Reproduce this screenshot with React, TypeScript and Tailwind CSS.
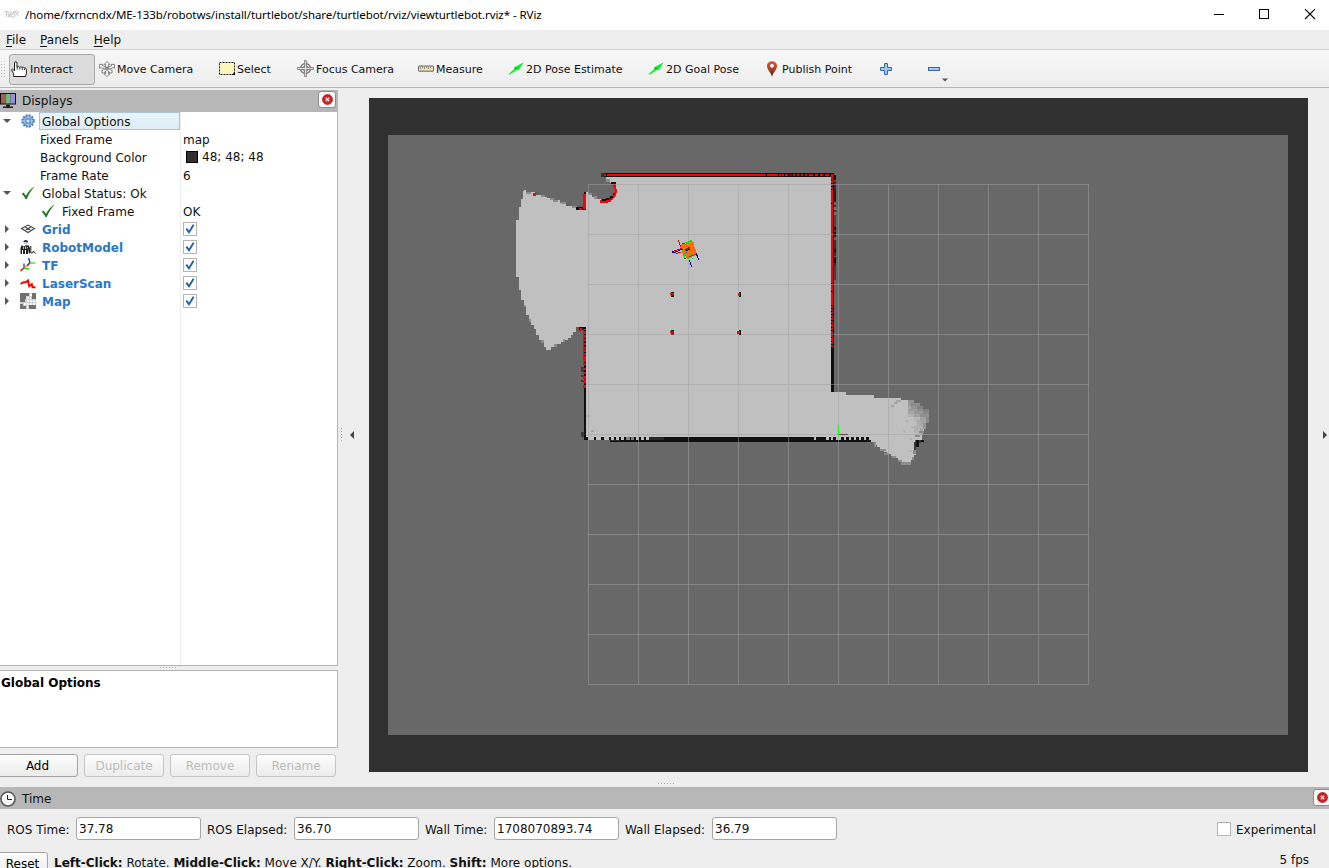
import React from "react";

const Z = "scale(0.333333)";

const wingCells = (() => {
  const out: { x: number; y: number; c: string }[] = [];
  for (let r = 0; r < 12; r++) {
    for (let k = 0; k < 8; k++) {
      const x = 1005 + k * 9;
      const y = 210 + r * 8.6;
      const right = r < 1 ? 1033 : r < 2 ? 1052 : r < 3 ? 1062 : r < 8 ? 1077 : r < 10 ? 1069 : 1064;
      if (x + 6 > right) continue;
      const dx = (x - 1005) / 63;
      const dy = Math.max(0, (258 - y) / 48);
      const t = dx <= 0.1 ? 0 : dy > 0 ? 0.1 + dx * 0.5 + dy * 0.4 : dx * dx * 0.6;
      const jitter = ((k * 7 + r * 11) % 5) * 4 - 8;
      if (t < 0.08) continue;
      const v = Math.round(Math.max(108, Math.min(190, 192 - t * 82 + jitter)));
      out.push({ x, y, c: `rgb(${v},${v},${v})` });
    }
  }
  return out;
})();

const lines = Array.from({ length: 11 }, (_, i) => i * 50);

const topDashes = [318, 354, 363, 373, 384, 394, 405, 417, 429, 442, 459, 473, 489, 507];
const rightDashes = [58, 69, 78, 87, 129, 369, 393, 434, 443, 452, 461, 470, 479, 488, 500, 511, 521, 532, 542, 552];
const leftDashes = [524, 532, 541, 550, 559, 568, 577, 586, 595];
const leftLow = [8, 19, 30, 42, 54, 63, 72, 82, 92, 102, 117, 129, 142, 155, 169];
const bottomLight = [
  [54, 18], [78, 15], [102, 15], [123, 9], [138, 9], [153, 9], [168, 12], [183, 9], [198, 9], [213, 9], [228, 9],
  [732, 6], [768, 9], [783, 6], [798, 9], [807, 6], [822, 6], [837, 6], [852, 6], [867, 6], [882, 6], [897, 6],
];
const shades = [
  [45, 16, "#0f0f0f"], [62, 28, "#303030"], [90, 36, "#202020"], [126, 9, "#686868"], [135, 6, "#303030"],
  [141, 9, "#787878"], [150, 6, "#303030"], [157, 9, "#707070"], [166, 35, "#454545"], [201, 9, "#181818"],
  [210, 6, "#383838"], [216, 16, "#181818"], [240, 26, "#303030"], [266, 10, "#111"], [276, 12, "#303030"],
  [290, 18, "#111"], [308, 10, "#303030"], [318, 42, "#424242"],
] as [number, number, string][];

function MapView() {
  return (
    <svg className="block h-[674px] w-[939px]" viewBox="369 98 939 674" shapeRendering="crispEdges">
      <rect x="369" y="98" width="939" height="674" fill="#303030" />
      <rect x="388" y="135" width="900" height="600" fill="#686868" />
      <g transform={`translate(500 160) ${Z}`}>
        <path fill="#c0c0c0" d="M72 93V90H78V97H105V105H123V111H140V115H160V120H180V129H204V138H225V144H249V103H258V97H265V105H275V110H290V118H303V126H330V115H345V75H335V68H330V60H318V51H997V840H257V510H228V517H220V525H212V533H205V540H196V545H182V553H162V562H152V570H138V560H132V548H123V540H117V525H108V508H103V495H93V480H87V465H78V440H72V420H63V390H57V350H48V180H57V141H63V117H69V93Z" />
        <path fill="#686868" d="M267 75H334V72H342V98H339V108H330V114H318V120H303V118H291V110H276V105H267Z" />
        <path fill="#8d8d8d" d="M78 97H92V103H78ZM123 106H135V111H123ZM150 115H162V120H150ZM160 120H175V125H160ZM182 125H197V131H182ZM216 139H231V145H216ZM265 100H275V105H265ZM282 108H291V117H282ZM318 57H330V66H318ZM189 538H196V546H189ZM162 553H170V560H162ZM72 435H78V441H72ZM87 477H93V486H87ZM123 540H132V548H123ZM360 49H385V52H360Z" />
        <path fill="#5f5f5f" d="M105 97H118V105H105ZM198 129H207V137H198ZM231 136H249V141H231ZM228 502H240V516H228Z" />
        <path fill="#101010" d="M303 39H600V51H303ZM333 66H348V73H333ZM228 141H258V150H228ZM237 502H258V600H237V515H249V510H237ZM252 97H258V103H252ZM306 117H324V123H306ZM318 114H333V120H318ZM330 108H339V114H330ZM338 98H345V108H338Z" />
        <path fill="#686868" d="M237 515H248V600H237Z" />
        <path fill="#303030" d="M303 39H312V51H303Z" />
        <path fill="red" d="M312 42H318V48H312ZM321 42H600V48H321ZM99 99H108V108H99ZM249 102H258V147H249ZM237 144H246V150H237ZM340 72H348V87H351V98H348V108H345V115H340V121H334V127H325V129H306V130H300V120H306V123H318V120H327V117H333V113H339V105H342V96H345V87H342V81H340ZM240 504H246V514H240ZM249 507H258V600H249Z" />
        <g fill="#101010">
          {leftDashes.map((y) => <rect key={y} x="252" y={y} width="6" height="4" />)}
          <path d="M513 396H522V411H513ZM513 510H522V525H513Z" />
        </g>
        <path fill="red" d="M510 399H522V405H510ZM510 513H522V519H510Z" />
      </g>
      <g transform={`translate(570 330) ${Z}`}>
        <path fill="#c0c0c0" d="M783 186H828V195H912V204H993V210H1018V219H1042V258H1068V285H1062V310H1055V330H1035V361H1038V375H1032V390H1023V398H996V391H984V385H972V379H963V373H951V367H942V360H930V352H921V345H912V335H903V327H783Z" />
        {wingCells.map((c, i) => <rect key={i} x={c.x} y={c.y} width="9.2" height="9" fill={c.c} />)}
        <path fill="#a4a4a4" d="M978 210H993V216H978ZM972 216H984V222H972ZM963 225H971V231H963Z" />
        <path fill="#8d8d8d" d="M912 337H918V351H912ZM930 358H948V364H930ZM942 369H957V376H942ZM966 379H978V385H966ZM984 391H996V397H984ZM993 397H1023V404H993ZM1030 361H1038V373H1030ZM1026 382H1032V391H1026ZM1047 303H1062V309H1047ZM1035 315H1050V321H1035Z" />
        <path fill="#b4b4b4" d="M1014 255H1024V261H1014ZM1005 270H1018V276H1005ZM1023 288H1032V296H1023ZM999 300H1009V306H999ZM1017 324H1026V330H1017ZM1018 360H1026V367H1018ZM48 255H57V261H48Z" />
        <path fill="#a8a8a8" d="M63 300H72V306H63Z" />
        <path fill="#111111" d="M1038 330H1047V351H1038ZM1053 330H1062V335H1053Z" />
        <path fill="#3b3b3b" d="M1032 336H1038V360H1032ZM1047 330H1053V340H1047ZM33 111H42V125H33ZM33 135H42V141H33ZM33 150H40V156H33ZM33 306H42V321H33Z" />
        <path fill="#101010" d="M42 0H48V321H903V335H105V330H42ZM783 0H792V186H783Z" />
        <path fill="#686868" d="M102 330H120V336H102Z" />
        <path fill="#292929" d="M237 321H282V330H237ZM120 330H150V333H120Z" />
        {bottomLight.map(([x, w]) => <rect key={x} x={x} y="321" width={w} height="9" fill={x === 168 || x === 183 ? "#858585" : "#c0c0c0"} />)}
        <g fill="red">
          {leftLow.map((y) => <rect key={y} x="39" y={y - 4} width="8" height="8" />)}
          <path d="M783 0H789V50H783Z" />
        </g>
        <path fill="#101010" d="M783 9H792V12H783ZM783 20H792V23H783ZM783 30H792V33H783ZM783 42H792V45H783Z" />
      </g>
      <g transform={`translate(660 160) ${Z}`}>
        <path fill="#101010" d="M0 39H522V520H513V51H0Z" />
        {shades.map(([y, h, c]) => <rect key={y} x="522" y={y} width="6" height={h} fill={c} />)}
        <path fill="red" d="M0 42H519V560H513V48H0Z" />
        <g fill="#101010">
          {topDashes.map((x, i) => <rect key={x} x={x} y="42" width={i < 4 ? 3 : 6} height="6" />)}
          {rightDashes.map((y) => <rect key={y} x="513" y={y} width="6" height="3" />)}
          <path d="M519 51H522V570H519Z" />
        </g>
      </g>
      <g fill="none" stroke="#a0a0a4" strokeOpacity="0.5" strokeWidth="1">
        {lines.map((v) => (
          <path key={v} d={`M${588.5 + v} 184V685M588 ${184.5 + v}H1089`} />
        ))}
      </g>
      <path fill="#101010" d="M739 292H741V297H739ZM739 330H741V335H739Z" />
      <path fill="red" d="M738 293H740V296H738ZM737 331H740V334H737Z" />
      <g transform={`translate(660 160) ${Z}`}>
        <path fill="#ff6c0a" d="M63 252H78V249H90V246H102V261H105V267H108V282H102V285H93V291H78V288H72V279H66V267H63Z" />
        <path fill="#00e000" d="M75 246H87V249H75ZM84 243H93V246H84ZM90 240H96V246H90ZM66 270H69V276H66ZM69 279H75V294H72V288H69ZM78 291H90V294H78ZM81 294H87V297H81ZM90 279H93V285H90ZM93 288H96V294H93ZM96 294H99V297H96Z" />
        <path fill="#5f4a20" d="M66 249H75V252H66ZM84 262H90V270H84ZM78 264H84V270H78ZM72 294H78V297H72ZM87 288H93V291H87ZM78 276H81V279H78Z" />
        <path fill="#e00000" d="M54 240H57V246H54ZM57 246H60V255H57ZM60 255H63V261H60ZM42 270H51V273H42ZM51 267H60V270H51ZM48 279H54V282H48ZM54 276H63V279H54ZM60 264H66V267H60ZM93 285H102V288H93ZM102 282H108V285H102ZM75 267H81V270H75Z" />
        <path fill="#0000cc" d="M36 273H42V279H36ZM42 276H48V279H42ZM45 273H54V276H45ZM54 270H60V273H54ZM60 267H69V270H60ZM75 270H84V273H75ZM84 267H90V270H84ZM108 279H111V287H108ZM111 285H114V294H111ZM114 294H117V300H114ZM87 300H90V306H87ZM90 306H93V315H90ZM93 315H96V321H93Z" />
      </g>
      <path fill="#00ff00" d="M838 425H839V435H838Z" />
      <path fill="#6b4848" d="M839 434H848V435H839Z" />
    </svg>
  );
}

function Hand() {
  return (
    <svg className="-ml-px h-4 w-4" viewBox="0 0 16 16">
      <path d="M2.7 15.5V12.8L.8 9.5C.3 8 1.6 7.5 2.5 8.7L3.5 10V2C3.5.2 6 .2 6 2V6.2C7 5.2 8.3 5.5 8.6 6.4C9.6 5.4 11 5.8 11.2 6.8C12.2 5.9 13.5 6.3 13.7 7.2C14.8 6.8 15.4 7.6 15.4 8.7V12.5L14.5 15.5Z" fill="#fff" stroke="#1c1c1c" strokeWidth="1" />
      <path d="M6.2 6V8.5M8.8 6.5V8.7M11.3 7V9M13.6 7.3V9" stroke="#222" strokeWidth=".9" />
    </svg>
  );
}

function MoveIcon() {
  return (
    <svg className="h-4 w-4" viewBox="0 0 16 16" fill="#fff" stroke="#666" strokeWidth=".8">
      <path d="M8 .5L10.8 3.4H9.3V5.7L12.7 4.8L12.2 3.4L15.6 3.4V7.3L14.2 6.6L10.5 8L12 9.5L13 9V12H9.8L10.6 11L9.3 10V13H10.8L8 15.6L5.2 13H6.7V10L5.4 11L6.2 12H3V9L4 9.5L5.5 8L1.8 6.6L.4 7.3V3.4H3.8L3.3 4.8L6.7 5.7V3.4H5.2Z" />
      <path d="M5.5 7.2L8 6L10.5 7.2L8 9.5Z" fill="#999" />
    </svg>
  );
}

function SelectIcon() {
  return (
    <svg className="h-4 w-4" viewBox="0 0 16 16">
      <rect x=".5" y="1.5" width="15" height="12" fill="#fbf6b9" stroke="#222" strokeDasharray="2 1" />
      <path d="M16 11V14H12.5Z" fill="#000" />
    </svg>
  );
}

function FocusIcon() {
  return (
    <svg className="h-[17px] w-[17px]" viewBox="0 0 17 17" fill="none" stroke="#777">
      <circle cx="8.5" cy="8.5" r="5" strokeWidth="1.3" />
      <circle cx="8.5" cy="8.5" r="2.6" />
      <path d="M7.5 .5H9.5V7.5H16.5V9.5H9.5V16.5H7.5V9.5H.5V7.5H7.5Z" strokeWidth=".8" fill="#ddd" />
    </svg>
  );
}

function MeasureIcon() {
  return (
    <svg className="h-4 w-4" viewBox="0 0 16 16">
      <rect x=".5" y="5" width="15" height="5.2" rx=".5" fill="#ece0b4" stroke="#666" />
      <path d="M2.5 5.5V8M4.5 5.5V7M6.5 5.5V8M8.5 5.5V7M10.5 5.5V8M12.5 5.5V7" stroke="#777" strokeWidth=".8" />
    </svg>
  );
}

function ArrowIcon() {
  return (
    <svg className="h-4 w-4" viewBox="0 0 16 16">
      <path d="M.6 13.2L6.5 7.8L5.5 6.8L15.6 1.2L10.8 9.5L9.5 8.5L1.7 13.8Z" fill="#0cf02a" />
      <path d="M6.5 7.8L8 6.2L9.5 8.5Z" fill="#0aa31c" />
    </svg>
  );
}

function Pin() {
  return (
    <svg className="h-4 w-3" viewBox="0 0 12 16">
      <defs>
        <linearGradient id="pin" x1="0" y1="0" x2="0" y2="1">
          <stop offset="0" stopColor="#e3583a" />
          <stop offset=".55" stopColor="#a63c22" />
          <stop offset="1" stopColor="#3d1c10" />
        </linearGradient>
      </defs>
      <path d="M6 16C5.5 12 1 9 1 5C1 2 3.2.2 6 .2S11 2 11 5C11 9 6.5 12 6 16Z" fill="url(#pin)" />
      <circle cx="6" cy="4.8" r="1.9" fill="#fff" />
    </svg>
  );
}

function CloseBadge() {
  return (
    <span className="mb-[3px] flex h-[17px] w-[18px] shrink-0 items-center justify-center rounded-[3px] border border-[#8d8d8d] bg-[#f8f8f8]">
      <svg className="h-[11px] w-[11px]" viewBox="0 0 11 11">
        <circle cx="5.5" cy="5.5" r="5" fill="#d02224" stroke="#a81518" strokeWidth=".7" />
        <path d="M3.8 3.8L7.2 7.2M7.2 3.8L3.8 7.2" stroke="#f6dcdc" strokeWidth="1.4" />
      </svg>
    </span>
  );
}

function Tri({ open }: { open?: boolean }) {
  return (
    <span className="flex w-[14px] shrink-0 items-center justify-center">
      <svg className="h-2 w-2" viewBox="0 0 8 8">
        <path d={open ? "M0 2H8L4 6Z" : "M2 0V8L6 4Z"} fill="#555" />
      </svg>
    </span>
  );
}

const Gear = () => (
  <svg className="h-[14px] w-[14px]" viewBox="0 0 14 14">
    <circle cx="7" cy="7" r="5.8" fill="none" stroke="#3f74b8" strokeWidth="1.9" strokeDasharray="1.8 1.24" />
    <circle cx="7" cy="7" r="5" fill="#8db5e2" stroke="#3f74b8" strokeWidth=".8" />
    <circle cx="7" cy="7" r="2.6" fill="none" stroke="#4a7dbf" strokeWidth=".9" />
    <circle cx="7" cy="7" r="1" fill="#fff" />
    <path d="M7 2V4.4M7 9.6V12M2 7H4.4M9.6 7H12" stroke="#dbe8f6" strokeWidth=".8" />
  </svg>
);
const Check = () => (
  <svg className="-ml-px h-[14px] w-[14px]" viewBox="0 0 14 14">
    <path d="M.8 8L2.5 6.6L5 9.8C7 6 9.8 2.5 13.7 .5C10.4 4.2 7.8 8.3 5.7 13H4.4C3.6 11 2.3 9 .8 8Z" fill="#1d7a1d" />
  </svg>
);
const GridIcon = () => (
  <svg className="h-4 w-4" viewBox="0 0 16 16" fill="none" stroke="#444" strokeWidth="1.1">
    <path d="M1.5 7.5L8 4L14.5 7.5L8 11.5ZM4.8 5.8L11.2 9.6M11.2 5.8L4.8 9.6" />
  </svg>
);
const RobotIcon = () => (
  <svg className="h-4 w-4" viewBox="0 0 16 16">
    <path d="M3.5 2Q5.8 -.2 8 2V3.2H3.5Z" fill="#232b55" />
    <path d="M4 3.2H7.2V5H4Z" fill="#ccc" />
    <path d="M1.5 6.2L4 7.5L5.5 6.2L9 6.5V10L8 15H6V11H5V15H3V11H2V15H.5V9Z" fill="#222" />
    <path d="M3.5 8V10M5.5 7.5V10M7.3 8V9.5" stroke="#ddd" strokeWidth=".9" />
    <path d="M9.5 14.5V8.5L10.8 7V14H12.5L13.5 12L15.5 14.5" fill="none" stroke="#222" strokeWidth="1" />
  </svg>
);
const TfIcon = () => (
  <svg className="h-4 w-4" viewBox="0 0 16 16" fill="none" strokeWidth="1.2">
    <path d="M4 11L10 6" stroke="#f5ad24" />
    <path d="M4.5 10.5L.5 14M9.5 6L7 9" stroke="#f00" strokeWidth="1.5" />
    <path d="M4 10V6.5M10 6L8.7 1" stroke="#1616d8" />
    <path d="M4 11L9.5 12.2M10 6H15.5" stroke="#0c0" />
  </svg>
);
const LaserIcon = () => (
  <svg className="h-4 w-4" viewBox="0 0 16 16">
    <path d="M.5 9L3 7.5L6 7L8 5.5L9.3 11.3L11.8 9.3L12.5 12.3H15.5" fill="none" stroke="#f00" strokeWidth="2" />
  </svg>
);
const MapIcon = () => (
  <svg className="h-4 w-4" viewBox="0 0 16 16" shapeRendering="crispEdges">
    <path fill="#cfcfcf" d="M0 0H16V16H0Z" />
    <path fill="#fff" d="M10 1H12V3H10ZM7 4H9V6H7ZM10 4H11V6H10ZM7 7H9V9H7ZM10 7H12V9H10ZM13 7H15V9H13ZM7 10H9V12H7ZM10 10H12V12H10ZM4 10H6V12H4ZM13 10H15V12H13ZM7 13H8V15H7Z" />
    <path fill="#707070" d="M0 0H9V3H6V6H5V9H0ZM12 0H16V6H12ZM0 11H3V13H6V16H0ZM9 12H16V16H9Z" />
  </svg>
);

function Box({ checked }: { checked?: boolean }) {
  return (
    <span className="flex h-[14px] w-[14px] shrink-0 items-center justify-center border border-[#b5b5b5] bg-white">
      {checked && (
        <svg className="h-[10px] w-[10px]" viewBox="0 0 10 10">
          <path d="M1.3 4.6L4 8.3L8.6 .8" fill="none" stroke="#1f63a8" strokeWidth="1.9" />
        </svg>
      )}
    </span>
  );
}

function Row({ tri, icon, label, value, bold, depth = 0 }: {
  tri?: "open" | "closed"; icon?: React.ReactNode; label: string; value?: React.ReactNode; bold?: boolean; depth?: number;
}) {
  return (
    <div className="flex h-[18px] items-center">
      <div className="flex h-full w-[181px] shrink-0 items-center">
        {tri ? <Tri open={tri === "open"} /> : <span className="w-[14px]" />}
        {depth === 1 && <span className="w-5" />}
        {icon && <span className="ml-[6px] mr-[6px] flex w-4 justify-center">{icon}</span>}
        {!icon && <span className="w-[26px]" />}
        <span className={bold ? "pt-[2px] font-bold text-[#2878c8]" : "pt-[2px]"}>{label}</span>
      </div>
      <div className="flex items-center pl-[2px]">{typeof value === "string" ? <span className="pt-[2px]">{value}</span> : value}</div>
    </div>
  );
}

function Button({ label, disabled, cls }: { label: string; disabled?: boolean; cls: string }) {
  return (
    <div className={`flex h-[23px] shrink-0 items-center justify-center rounded-[3px] border bg-linear-to-b from-[#fdfdfd] to-[#ececec] ${disabled ? "border-[#c6c6c6] text-[#bdbdbd]" : "border-[#a4a4a4] text-black"} ${cls}`}>
      {label}
    </div>
  );
}

function Field({ label, value, cls }: { label: string; value: string; cls: string }) {
  return (
    <div className="flex items-center">
      <span className={`shrink-0 pt-[2px] ${cls}`}>{label}</span>
      <span className="flex h-[23px] w-[125px] items-center rounded-[3px] border border-[#a5a5a5] bg-white pl-[2px] pt-px">{value}</span>
    </div>
  );
}

function Tool({ icon, label, cls }: { icon: React.ReactNode; label: string; cls: string }) {
  return (
    <div className={`flex shrink-0 items-center ${cls}`}>
      {icon}
      <span className="ml-[2px] pt-[3px] text-[11px]">{label}</span>
    </div>
  );
}

export default function App() {
  return (
    <div className="flex h-[868px] w-[1329px] flex-col overflow-hidden whitespace-nowrap bg-[#eeeeee] font-['DejaVu_Sans',sans-serif] text-[12px] leading-[18px] text-[#111]">
      <div className="flex h-[30px] shrink-0 items-center bg-white pl-1 font-['Noto_Sans',sans-serif] text-black">
        <svg className="h-4 w-4" viewBox="0 0 16 16" fill="none" stroke="#b4b4b4" strokeWidth=".8">
          <path d="M.5 4.5H3V6.5L1.5 7.5M2.5 7V10M4 4.5L5 10L7 5.5M7 4.5V10.5M8.5 8L10 4L12 5L10 7L12 9.5M12 4L14.8 5.5L12 7L14.8 9M8 10H11" />
        </svg>
        <span className="ml-[5px] text-[11.5px] tracking-[-0.06px]">/home/fxrncndx/ME-133b/robotws/install/turtlebot/share/turtlebot/rviz/viewturtlebot.rviz* - RViz</span>
        <svg className="ml-auto h-[30px] w-[129px]" viewBox="1200 0 129 30" fill="none" stroke="#000">
          <path d="M1214 14.5H1224" />
          <rect x="1259.5" y="9.5" width="9" height="9" />
          <path d="M1305 9.2L1315 19M1315 9.2L1305 19" strokeWidth="1.1" />
        </svg>
      </div>
      <div className="flex h-[20px] shrink-0 items-center border-b border-[#d2d2d2] pl-[6px]">
        <span><u className="underline-offset-2">F</u>ile</span>
        <span className="ml-[14px]"><u className="underline-offset-2">P</u>anels</span>
        <span className="ml-[15px]"><u className="underline-offset-2">H</u>elp</span>
      </div>
      <div className="flex h-[38px] shrink-0 items-center border-b border-[#b4b4b4] bg-linear-to-b from-[#f8f8f8] to-[#ededed]">
        <svg className="h-[18px] w-2 shrink-0" viewBox="0 0 8 18" shapeRendering="crispEdges">
          {[0, 3, 6, 9, 12, 15].map((y) => <path key={y} fill="#bbb" d={`M1 ${y + 1}h1v1h-1ZM4 ${y + 1}h1v1h-1Z`} />)}
        </svg>
        <div className="ml-px mt-px flex h-[31px] w-[86px] shrink-0 items-center rounded-[3px] border border-[#a8a8a8] bg-[#dcdcdc] pl-[2px]">
          <Hand />
          <span className="ml-[3px] pt-[2px] text-[11px]">Interact</span>
        </div>
        <Tool icon={<MoveIcon />} label="Move Camera" cls="ml-1 w-[120px]" />
        <Tool icon={<SelectIcon />} label="Select" cls="w-[78px]" />
        <Tool icon={<FocusIcon />} label="Focus Camera" cls="w-[121px]" />
        <Tool icon={<MeasureIcon />} label="Measure" cls="w-[90px]" />
        <Tool icon={<ArrowIcon />} label="2D Pose Estimate" cls="w-[140px]" />
        <Tool icon={<ArrowIcon />} label="2D Goal Pose" cls="w-[118px]" />
        <Tool icon={<Pin />} label="Publish Point" cls="[&>span]:ml-1" />
        <svg className="ml-auto h-[38px] w-[449px]" viewBox="880 50 449 38">
          <path d="M884.5 63.5H887.5V67.5H891.5V70.5H887.5V74.5H884.5V70.5H880.5V67.5H884.5Z" fill="#a3c6ed" stroke="#3668a8" />
          <rect x="928.5" y="67.5" width="11" height="3" fill="#a3c6ed" stroke="#3668a8" />
          <path d="M942 78.5H948L945 81.5Z" fill="#555" />
        </svg>
      </div>
      <div className="flex h-[699px] shrink-0">
        <div className="flex w-[338px] shrink-0 flex-col pt-[2px]">
          <div className="flex h-[22px] shrink-0 items-center bg-[#b7b7b7] pr-[2px]">
            <svg className="h-4 w-4" viewBox="0 0 16 16">
              <path d="M0 0H16V11.5H0Z" fill="#111" />
              <path d="M1 1H5.7V10.5H1Z" fill="#a25c5c" />
              <path d="M5.7 1H10.4V10.5H5.7Z" fill="#6cbc74" />
              <path d="M10.4 1H15V10.5H10.4Z" fill="#9590dc" />
              <path d="M6 11.5H10V13.5H13V15H3V13.5H6Z" fill="#222" />
            </svg>
            <span className="ml-[6px] mr-auto">Displays</span>
            <CloseBadge />
          </div>
          <div className="flex h-[554px] shrink-0 flex-col border-b border-r border-[#b4b4b4] bg-white bg-linear-to-r from-transparent from-[180px] via-[#dcdcdc] via-[180px] to-transparent to-[181px]">
            <div className="flex h-[18px] items-center">
              <Tri open />
              <span className="ml-[6px] flex w-4 justify-center"><Gear /></span>
              <span className="ml-[3px] h-[18px] w-[141px] border border-[#a9c4d8] bg-linear-to-b from-[#ebf5fb] to-[#dcebf5] pl-[2px] leading-[19px]">Global Options</span>
            </div>
            <Row label="Fixed Frame" value="map" />
            <Row label="Background Color" value={<><span className="ml-[3px] mr-1 h-3 w-3 border border-black bg-[#303030]" />48; 48; 48</>} />
            <Row label="Frame Rate" value="6" />
            <Row tri="open" icon={<Check />} label="Global Status: Ok" />
            <Row depth={1} icon={<Check />} label="Fixed Frame" value="OK" />
            <Row tri="closed" icon={<GridIcon />} label="Grid" bold value={<Box checked />} />
            <Row tri="closed" icon={<RobotIcon />} label="RobotModel" bold value={<Box checked />} />
            <Row tri="closed" icon={<TfIcon />} label="TF" bold value={<Box checked />} />
            <Row tri="closed" icon={<LaserIcon />} label="LaserScan" bold value={<Box checked />} />
            <Row tri="closed" icon={<MapIcon />} label="Map" bold value={<Box checked />} />
          </div>
          <div className="flex h-1 shrink-0 items-start gap-[2px] pl-[160px] pt-px">
            {[0, 1, 2, 3, 4, 5].map((i) => <span key={i} className="h-px w-px bg-[#aaa]" />)}
          </div>
          <div className="h-[78px] shrink-0 border border-l-0 border-[#b4b4b4] bg-white pl-px pt-[3px] font-bold text-black">Global Options</div>
          <div className="flex gap-[6px] pt-[6px]">
            <Button label="Add" cls="-ml-[3px] w-[81px]" />
            <Button label="Duplicate" cls="w-[80px]" disabled />
            <Button label="Remove" cls="w-[80px]" disabled />
            <Button label="Rename" cls="w-[80px]" disabled />
          </div>
        </div>
        <div className="flex w-[31px] shrink-0 items-center pb-[5px]">
          <svg className="h-4 w-5" viewBox="338 427 20 16">
            <path d="M354 431V439L350 435Z" fill="#444" />
            <path d="M341 428h1v1h-1zM341 431h1v1h-1zM341 434h1v1h-1zM341 437h1v1h-1zM341 440h1v1h-1z" fill="#aaa" />
          </svg>
        </div>
        <div className="flex w-[939px] shrink-0 flex-col pt-[10px]">
          <MapView />
          <div className="flex gap-[2px] pl-[289px] pt-[11px]">
            {[0, 1, 2, 3, 4, 5].map((i) => <span key={i} className="h-px w-px bg-[#aaa]" />)}
          </div>
        </div>
        <div className="flex flex-1 items-center justify-end pb-[5px]">
          <svg className="h-4 w-[7px]" viewBox="0 0 7 16"><path d="M1 4V12L5 8Z" fill="#444" /></svg>
        </div>
      </div>
      <div className="flex h-[22px] shrink-0 items-center bg-[#b7b7b7]">
        <svg className="mt-px h-4 w-4" viewBox="0 0 16 16">
          <circle cx="8" cy="8" r="7" fill="#fff" stroke="#555" strokeWidth="1.6" />
          <path d="M7.5 4V8.5H12" fill="none" stroke="#222" />
        </svg>
        <span className="ml-[6px] mr-auto pt-[2px]">Time</span>
        <span className="-mr-[2px] flex pt-px"><CloseBadge /></span>
      </div>
      <div className="flex h-[43px] shrink-0 items-start pl-[7px] pr-[13px] pt-[8px]">
        <Field label="ROS Time:" value="37.78" cls="w-[69px]" />
        <Field label="ROS Elapsed:" value="36.70" cls="ml-[6px] w-[87px]" />
        <Field label="Wall Time:" value="1708070893.74" cls="ml-[6px] w-[69px]" />
        <Field label="Wall Elapsed:" value="36.79" cls="ml-[6px] w-[87px]" />
        <div className="ml-auto flex h-[23px] items-center gap-[5px]">
          <Box />
          <span className="pt-[2px]">Experimental</span>
        </div>
      </div>
      <div className="flex h-[24px] shrink-0 items-start">
        <Button label="Reset" cls="-ml-[3px] w-[51px]" />
        <span className="ml-[6px] mt-[2px]"><b>Left-Click:</b> Rotate. <b>Middle-Click:</b> Move X/Y. <b>Right-Click:</b> Zoom. <b>Shift:</b> More options.</span>
        <span className="ml-auto mr-5 -mt-px">5 fps</span>
      </div>
    </div>
  );
}
